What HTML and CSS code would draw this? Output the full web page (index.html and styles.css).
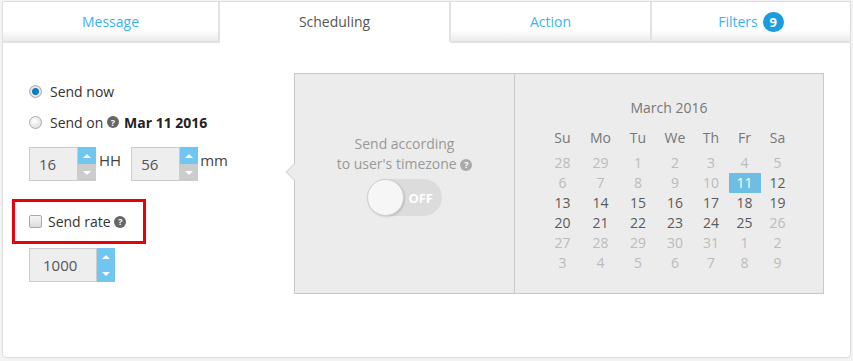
FILE: index.html
```html
<!DOCTYPE html>
<html lang="en">
<head>
  <meta charset="UTF-8" />
  <meta name="viewport" content="width=device-width, initial-scale=1.0"/>
  <title>Scheduling</title>
  <link rel="stylesheet" href="styles.css">
</head>
<body>
<div class="panel">
  <div class="tabs">
    <div class="tab tab-message">Message</div>
    <div class="tab tab-scheduling active">Scheduling</div>
    <div class="tab tab-action">Action</div>
    <div class="tab tab-filters">Filters <span class="badge">9</span></div>
  </div>

  <div class="content">
    <div class="options">
      <label class="option"><span class="radio checked"></span>Send now</label>
      <label class="option option-on"><span class="radio"></span>Send on <span class="help">?</span><strong>Mar 11 2016</strong></label>

      <div class="time-row">
        <div class="spin">
          <span class="spin-value">16</span>
          <span class="spin-btns"><span class="up"></span><span class="down"></span></span>
        </div>
        <span class="unit">HH</span>
        <div class="spin spin-min">
          <span class="spin-value">56</span>
          <span class="spin-btns"><span class="up"></span><span class="down"></span></span>
        </div>
        <span class="unit">mm</span>
      </div>

      <div class="highlight">
        <label class="option"><span class="check"></span>Send rate <span class="help">?</span></label>
      </div>

      <div class="spin spin-rate">
        <span class="spin-value">1000</span>
        <span class="spin-btns"><span class="up"></span><span class="down"></span></span>
      </div>
    </div>

    <div class="schedule">
      <span class="pointer"></span>
      <div class="tz">
        <p>Send according<br>to user's timezone <span class="help light">?</span></p>
        <div class="toggle"><span class="knob"></span>OFF</div>
      </div>
      <div class="calendar">
        <div class="cal-title">March 2016</div>
        <div class="cal-grid cal-head">
          <span>Su</span><span>Mo</span><span>Tu</span><span>We</span><span>Th</span><span>Fr</span><span>Sa</span>
        </div>
        <div class="cal-grid cal-days">
          <span class="off">28</span><span class="off">29</span><span class="off">1</span><span class="off">2</span><span class="off">3</span><span class="off">4</span><span class="off">5</span>
          <span class="off">6</span><span class="off">7</span><span class="off">8</span><span class="off">9</span><span class="off">10</span><span class="selected">11</span><span>12</span>
          <span>13</span><span>14</span><span>15</span><span>16</span><span>17</span><span>18</span><span>19</span>
          <span>20</span><span>21</span><span>22</span><span>23</span><span>24</span><span>25</span><span class="off">26</span>
          <span class="off">27</span><span class="off">28</span><span class="off">29</span><span class="off">30</span><span class="off">31</span><span class="off">1</span><span class="off">2</span>
          <span class="off">3</span><span class="off">4</span><span class="off">5</span><span class="off">6</span><span class="off">7</span><span class="off">8</span><span class="off">9</span>
        </div>
      </div>
    </div>
  </div>
</div>
</body>
</html>
```

FILE: styles.css
```css
body {
  margin: 0;
  padding: 1px 2px;
  background: #f3f3f3;
  font-family: "Open Sans", sans-serif;
  font-size: 14px;
  color: #333;
}

.panel {
  width: 849px;
  height: 357px;
  box-sizing: border-box;
  background: #fff;
  border: 1px solid #ddd;
  border-radius: 0 0 4px 4px;
}

/* tabs */
.tabs {
  display: flex;
  height: 41px;
}

.tab {
  box-sizing: border-box;
  height: 41px;
  display: flex;
  align-items: center;
  justify-content: center;
  color: #3ab4f2;
  border-right: 2px solid #e2e2e2;
  border-bottom: 2px solid #e2e2e2;
  background: linear-gradient(#fff 72%, #ebebeb);
}

.tab-message { width: 217px; }
.tab-scheduling { width: 231px; }
.tab-action { width: 201px; }
.tab-filters { flex: 1; border-right: none; }

.tab.active {
  color: #555;
  background: #fff;
  border-bottom-color: transparent;
}

.badge {
  display: inline-flex;
  align-items: center;
  justify-content: center;
  width: 21px;
  height: 20px;
  margin-left: 5px;
  border-radius: 10px;
  background: #1a9de0;
  color: #fff;
  font-weight: bold;
  font-size: 13px;
}

/* content */
.content {
  display: flex;
  padding: 30px 0 0 26px;
}

.options {
  width: 265px;
  padding-top: 8px;
}

.option {
  display: flex;
  align-items: center;
  height: 20px;
  white-space: pre;
}

.option-on {
  margin-top: 11px;
}

.option-on .help {
  margin: 0 5px 0 0;
}

.option strong {
  color: #222;
}

.radio {
  width: 11px;
  height: 11px;
  margin-right: 8px;
  border: 1px solid #aaa;
  border-radius: 50%;
  background: radial-gradient(circle at 40% 35%, #fff, #d6d6d6);
}

.radio.checked {
  background: radial-gradient(circle, #0a7cc0 0 3px, #e8e8e8 4px, #cfcfcf);
}

.check {
  width: 11px;
  height: 11px;
  margin-right: 6px;
  border: 1px solid #aaa;
  border-radius: 2px;
  background: linear-gradient(#f6f6f6, #dcdcdc);
}

.help {
  display: inline-flex;
  align-items: center;
  justify-content: center;
  width: 12px;
  height: 12px;
  border-radius: 50%;
  background: #666;
  color: #fff;
  font-size: 9px;
  font-weight: bold;
  line-height: 1;
}

.help.light {
  background: #aaa;
  vertical-align: 1px;
}

/* spinners */
.time-row {
  display: flex;
  margin-top: 15px;
}

.spin {
  display: flex;
  height: 34px;
}

.spin-value {
  box-sizing: border-box;
  width: 49px;
  padding-left: 9px;
  background: #eee;
  border: 1px solid #ccc;
  line-height: 32px;
  font-size: 15px;
  color: #555;
}

.spin-btns {
  display: flex;
  flex-direction: column;
  width: 18px;
}

.spin-btns span {
  flex: 1;
  display: flex;
  align-items: center;
  justify-content: center;
}

.spin-btns .up {
  background: #6ec6f1;
}

.spin-btns .down {
  background: #ccc;
}

.spin-btns .up::after,
.spin-btns .down::after {
  content: "";
  border-left: 4px solid transparent;
  border-right: 4px solid transparent;
}

.spin-btns .up::after {
  border-bottom: 4px solid #fff;
}

.spin-btns .down::after {
  border-top: 4px solid #fff;
}

.unit {
  margin: 3px 0 0 3px;
  line-height: 20px;
  font-size: 15px;
  color: #444;
}

.spin-min {
  margin-left: 10px;
}

.spin-min + .unit {
  margin-left: 2px;
}

.highlight {
  box-sizing: border-box;
  width: 134px;
  height: 45px;
  margin: 18px 0 0 -17px;
  padding-left: 14px;
  display: flex;
  align-items: center;
  border: 3px solid #e8000b;
}

.spin-rate {
  margin-top: 4px;
}

.spin-rate .spin-value {
  width: 68px;
  padding-left: 13px;
}

.spin-rate .spin-btns .down {
  background: #6ec6f1;
}

/* schedule box */
.schedule {
  position: relative;
  display: flex;
  width: 530px;
  height: 221px;
  box-sizing: border-box;
  background: #ececec;
  border: 1px solid #c8c8c8;
}

.pointer {
  position: absolute;
  left: -7px;
  top: 92px;
  width: 11px;
  height: 11px;
  background: #ececec;
  border-left: 1px solid #d6d6d6;
  border-bottom: 1px solid #d6d6d6;
  transform: rotate(45deg);
}

.tz {
  width: 220px;
  border-right: 1px solid #c8c8c8;
  display: flex;
  flex-direction: column;
  align-items: center;
  padding-top: 60px;
  box-sizing: border-box;
}

.tz p {
  margin: 0;
  line-height: 20px;
  text-align: center;
  color: #999;
}

.toggle {
  position: relative;
  box-sizing: border-box;
  width: 75px;
  height: 37px;
  margin-top: 5px;
  padding-right: 9px;
  border-radius: 19px;
  background: #dcdcdc;
  display: flex;
  align-items: center;
  justify-content: flex-end;
  color: #fff;
  font-weight: bold;
  font-size: 13px;
}

.knob {
  position: absolute;
  left: 0;
  top: 0;
  width: 37px;
  height: 37px;
  box-sizing: border-box;
  border-radius: 50%;
  background: #f6f6f6;
  border: 1px solid #cfcfcf;
  box-shadow: 1px 1px 2px rgba(0, 0, 0, 0.15);
}

/* calendar */
.calendar {
  flex: 1;
  padding-top: 24px;
}

.cal-title {
  text-align: center;
  line-height: 20px;
  color: #777;
}

.cal-grid {
  display: grid;
  grid-template-columns: 38px 38px 37px 37px 35px 32px 34px;
  grid-auto-rows: 20px;
  justify-content: center;
  line-height: 20px;
  text-align: center;
}

.cal-head {
  margin-top: 10px;
  color: #777;
}

.cal-days {
  margin-top: 5px;
  color: #5a5a5a;
}

.cal-days .off {
  color: #bbb;
}

.cal-days .selected {
  background: #6dbde4;
  color: #fff;
}
```
